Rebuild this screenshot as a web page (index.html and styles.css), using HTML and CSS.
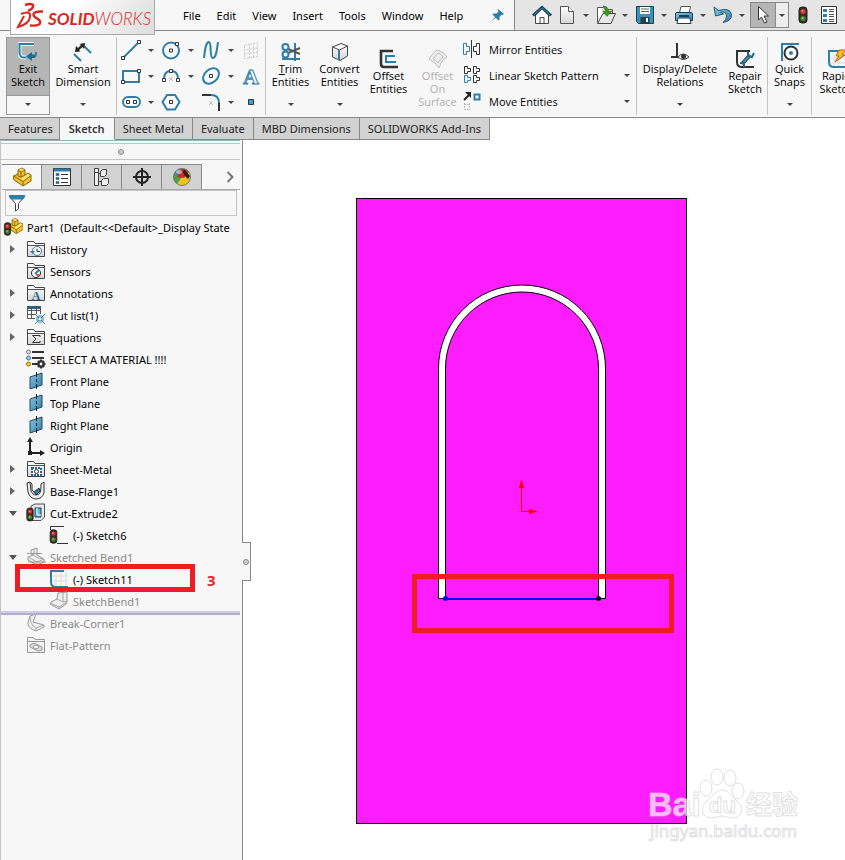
FILE: index.html
```
<!DOCTYPE html>
<html lang="en">
<head>
  <meta charset="UTF-8">
  <meta name="viewport" content="width=device-width, initial-scale=1.0">
  <title>SOLIDWORKS - Part1</title>
  <link rel="stylesheet" href="styles.css">
</head>
<body>

  <svg class="defs" aria-hidden="true">
    <defs>
      <linearGradient id="blue" x1="0" y1="0" x2="1" y2="1">
        <stop offset="0" stop-color="#8cc5e0"/><stop offset="1" stop-color="#2f7ea6"/>
      </linearGradient>
      <linearGradient id="grey" x1="0" y1="0" x2="0" y2="1">
        <stop offset="0" stop-color="#fff"/><stop offset="1" stop-color="#d5d5d5"/>
      </linearGradient>
      <symbol id="folder" viewBox="0 0 20 20">
        <path d="M1.500 17.500V2.500H7.500L9 4.500H18.500V17.500Z" fill="url(#grey)" stroke="#444"/>
        <path d="M2 6.500H18" stroke="#555"/>
      </symbol>
      <symbol id="plane" viewBox="0 0 20 20">
        <path d="M4 6L16 2V14L4 18Z" fill="url(#blue)" stroke="#1c4b66"/>
        <path d="M10.500 1V19" stroke="#222" stroke-dasharray="5 2 3 2"/>
      </symbol>
      <symbol id="light" viewBox="0 0 10 18">
        <rect x="1" y="1" width="8" height="16" rx="3" fill="#3a2a2a" stroke="#222"/>
        <circle cx="5" cy="5.500" r="2.600" fill="#d8322c"/><circle cx="5" cy="12.500" r="2.600" fill="#3d8a2d"/>
        <circle cx="4.500" cy="5" r="1" fill="#ff8a70"/><circle cx="4.500" cy="12" r="1" fill="#8ccf70"/>
      </symbol>
      <symbol id="part" viewBox="0 0 20 20">
        <path d="M6 3L10 1L13 3V8L16 6L19 8V14L11 19L1.500 12.500V9L6 7Z" fill="#f2c12e" stroke="#8a6508"/>
        <path d="M1.500 9L11 14.500V19M11 14.500L19 8.500M6 3L9 5L13 3M9 5V10L13 8M6 7V9L9 10" fill="none" stroke="#8a6508"/>
        <path d="M7 3L10 1.500L12 3L9 4.300ZM12.500 9.500L16 7L18 8.500L11 13.500L9 12Z" fill="#ffe488"/>
      </symbol>
      <symbol id="bend" viewBox="0 0 20 20">
        <path d="M5 3L11 1V8L18 12V15L11 18L2 13V10L7 8L5 7Z" fill="#eee" stroke="#999"/>
        <path d="M7 8L12 11L18 12M2 10L11 15V18M11 15L18 12M8 2V8" fill="none" stroke="#aaa"/>
      </symbol>
    </defs>
  </svg>

  <header class="topbar">
    <div class="logo">
      <svg width="30" height="30" viewBox="0 0 30 30" fill="none" stroke="#d8281e">
        <path d="M10 3Q16 1 18 3Q19 6 13 9" stroke-width="2.400"/>
        <path d="M6 12Q16 8 15 15Q14 22 3 25L9 14" stroke-width="2"/>
        <path d="M28 9.500Q18 9 18.500 13Q19 15 23 17Q27 20 24 22.500Q21 24 15 23.500" stroke-width="2.400"/>
      </svg>
      <span><b>SOLID</b>WORKS</span>
    </div>
    <nav class="menu">
      <a href="#">File</a>
      <a href="#">Edit</a>
      <a href="#">View</a>
      <a href="#">Insert</a>
      <a href="#">Tools</a>
      <a href="#">Window</a>
      <a href="#">Help</a>
      <button class="pin" aria-label="Pin menu">
        <svg width="14" height="14" viewBox="0 0 14 14"><path d="M7 1L13 6L11.500 7L10.500 6.800L8.500 9L8.600 11.500L7.500 12.500L4.700 9.800L1 13L4 9L1.500 6.500L2.500 5.400L5.500 5.600L7.500 3.500L6.500 2Z" fill="#2f7ea6"/></svg>
      </button>
    </nav>
    <div class="quick">
      <button aria-label="Home"><svg width="20" height="20" viewBox="0 0 20 20"><path d="M3.500 10V18.500H16.500V10L10 4Z" fill="#fff" stroke="#444"/><path d="M8 18.500V12.500H12V18.500" fill="none" stroke="#444"/><path d="M1 10.500L10 2.500L19 10.500" fill="none" stroke="#173f57" stroke-width="3"/><path d="M2 9.800L10 2.800L18 9.800" fill="none" stroke="#3b8fb8"/></svg></button>
      <button aria-label="New" class="new"><svg width="20" height="20" viewBox="0 0 20 20"><path d="M3.500 1.500H11.500L16.500 6.500V18.500H3.500Z" fill="url(#grey)" stroke="#555"/><path d="M11.500 1.500V6.500H16.500" fill="#fff" stroke="#555"/></svg></button><i class="caret"></i>
      <button aria-label="Open"><svg width="22" height="20" viewBox="0 0 22 20"><path d="M2.500 17.500V2.500H8.500L10 4.500H17.500V8" fill="#fff" stroke="#555"/><path d="M2.500 18.500L8 8.500H20.500L16 18.500Z" fill="#e8e8e8" stroke="#444"/><path d="M8 1Q13 1 13.500 6H17L12 11.500L7.500 6H10.500Q10.500 3 8 1Z" fill="#3c9a1c" stroke="#20600c" stroke-width=".5"/></svg></button><i class="caret"></i>
      <button aria-label="Save"><svg width="20" height="20" viewBox="0 0 20 20"><path d="M1.500 1.500H18.500V18.500H3.500L1.500 16.500Z" fill="#3b8fb8" stroke="#173f57"/><path d="M5 2H15V9H5Z" fill="#fff"/><path d="M6 4H14M6 6.500H14" stroke="#666"/><path d="M5.500 12H14.500V18H5.500Z" fill="#2a3f4c"/><path d="M11 13H13V17H11Z" fill="#fff"/></svg></button><i class="caret"></i>
      <button aria-label="Print"><svg width="20" height="20" viewBox="0 0 20 20"><path d="M5.500 8L7 1.500H16.500L15 8" fill="#fff" stroke="#555"/><path d="M1.500 9Q1.500 7.500 3 7.500H17Q18.500 7.500 18.500 9V15.500H1.500Z" fill="url(#blue)" stroke="#173f57"/><path d="M4 13L3 18.500H17L16 13Z" fill="#fff" stroke="#173f57"/><path d="M5 11H15" stroke="#173f57" stroke-width="2"/></svg></button><i class="caret"></i>
      <button aria-label="Undo"><svg width="20" height="20" viewBox="0 0 20 20"><path d="M1 2L2.500 11L10.500 9L7.500 7.200Q13 6 13.500 11Q13.500 15 10 17.500Q19 16 18.500 9.500Q17 2 5.500 5.500Z" fill="url(#blue)" stroke="#235c7b"/></svg></button><i class="caret last"></i>
      <div class="picker">
        <button aria-label="Select"><svg width="14" height="20" viewBox="0 0 14 20"><path d="M2.500 1.500V15L5.500 12L8.500 18L11 17L8 11H12.500Z" fill="#fff" stroke="#333"/></svg></button>
        <button aria-label="Select options" class="drop"><i class="caret"></i></button>
      </div>
      <button class="rebuild" aria-label="Rebuild"><svg width="10" height="18"><use href="#light"/></svg></button>
      <button aria-label="Options"><svg width="18" height="20" viewBox="0 0 18 20"><path d="M1.500 1.500H16.500V18.500H1.500Z" fill="#fff" stroke="#333"/><path d="M3 4H7V7H3ZM3 9H7V12H3ZM3 14H7V17H3Z" fill="#2f7ea6"/><path d="M9 4.500H14M9 6.500H14M9 9.500H14M9 11.500H14M9 14.500H14M9 16.500H14" stroke="#555"/></svg></button>
    </div>
  </header>

  <section class="ribbon">
    <button class="tool exit">
      <svg width="20" height="20" viewBox="0 0 20 20"><path d="M16 2H1.500V11Q2 15.500 6 15.500H8" fill="none" stroke="#e9f5fb" stroke-width="4"/><path d="M16 2H1.500V11Q2 15.500 6 15.500H8M18 10V12Q18 14.500 15 14.500" fill="none" stroke="#2f7ea6" stroke-width="2"/><path d="M8 14.500L14 10V12.500H17V16H14V19Z" fill="#1f6b91"/></svg>
      <span>Exit<br>Sketch</span>
      <i class="caret"></i>
    </button>
    <button class="tool smart">
      <svg width="20" height="20" viewBox="0 0 20 20"><path d="M1 12L8 19M11 4L18 11" stroke="#2f7ea6" stroke-width="2"/><path d="M2 10L3 4L5 6L8 3L6.500 2L12 1L11 7L9.500 5L6 8L7.500 9.500Z" fill="#222"/></svg>
      <span>Smart<br>Dimension</span>
      <i class="caret"></i>
    </button>
    <div class="entities">
      <button aria-label="Line"><svg width="20" height="20" viewBox="0 0 20 20"><path d="M3 17L17 3" stroke="#2f7ea6" stroke-width="2"/><path d="M.5 16.500H3.500V19.500H.5ZM16.500.5H19.500V3.500H16.500Z" fill="#fff" stroke="#333"/></svg></button><i class="caret"></i>
      <button aria-label="Circle"><svg width="20" height="20" viewBox="0 0 20 20"><circle cx="10" cy="10.500" r="8" fill="none" stroke="#2f7ea6" stroke-width="2"/><path d="M8.500 9H11.500V12H8.500ZM14.500 2.500H17.500V5.500H14.500Z" fill="#fff" stroke="#333"/></svg></button><i class="caret"></i>
      <button aria-label="Spline"><svg width="20" height="20" viewBox="0 0 20 20"><path d="M3 18C4 9 5 2 8 2C11 2 8 18 12 18C15 18 16 10 17 2" fill="none" stroke="#2f7ea6" stroke-width="2"/></svg></button><i class="caret"></i>
      <button aria-label="Sketch plane"><svg width="20" height="20" viewBox="0 0 20 20"><path d="M3.500 5.500L16.500 2.500V16.500L3.500 18.500ZM8.500 4V18M12.500 3V17M3 10L17 8M3 14L17 12" fill="none" stroke="#ccc" stroke-dasharray="2 1"/></svg></button>
      <button aria-label="Rectangle"><svg width="20" height="20" viewBox="0 0 20 20"><path d="M2 5H18V16H2Z" fill="none" stroke="#2f7ea6" stroke-width="2"/><path d="M.5 14.500H3.500V17.500H.5ZM16.500 3.500H19.500V6.500H16.500Z" fill="#fff" stroke="#333"/></svg></button><i class="caret"></i>
      <button aria-label="Arc"><svg width="20" height="20" viewBox="0 0 20 20"><path d="M3 13Q3 5 10 5Q17 5 17 13" fill="none" stroke="#2f7ea6" stroke-width="2"/><path d="M8 11L12 15M12 11L8 15" stroke="#bbb"/><path d="M1.500 12.500H4.500V15.500H1.500ZM8.500 3.500H11.500V6.500H8.500ZM15.500 12.500H18.500V15.500H15.500Z" fill="#fff" stroke="#333"/></svg></button><i class="caret"></i>
      <button aria-label="Ellipse"><svg width="20" height="20" viewBox="0 0 20 20"><ellipse cx="10" cy="10" rx="9" ry="6.500" transform="rotate(-42 10 10)" fill="none" stroke="#2f7ea6" stroke-width="2"/><path d="M8.500 8.500H11.500V11.500H8.500Z" fill="#fff" stroke="#333"/></svg></button><i class="caret"></i>
      <button aria-label="Text"><svg width="20" height="20" viewBox="0 0 20 20"><text x="10" y="18" text-anchor="middle" class="glyph outline">A</text></svg></button>
      <button aria-label="Slot"><svg width="20" height="20" viewBox="0 0 20 20"><rect x="2" y="5" width="17" height="10" rx="5" fill="none" stroke="#2f7ea6" stroke-width="2"/><path d="M5.500 8.500H8.500V11.500H5.500ZM12.500 8.500H15.500V11.500H12.500Z" fill="#fff" stroke="#333"/></svg></button><i class="caret"></i>
      <button aria-label="Polygon"><svg width="20" height="20" viewBox="0 0 20 20"><path d="M6 3H14L18.500 10L14 17.500H6L1.500 10Z" fill="none" stroke="#2f7ea6" stroke-width="2"/><path d="M8.500 8.500H11.500V11.500H8.500Z" fill="#fff" stroke="#333"/></svg></button><i></i>
      <button aria-label="Fillet"><svg width="20" height="20" viewBox="0 0 20 20"><path d="M1 3H10M18 11V19" stroke="#333" stroke-width="2"/><path d="M10 3Q18 3 18 11" fill="none" stroke="#2f7ea6" stroke-width="2"/><path d="M8 9L12 13M12 9L8 13" stroke="#bbb"/></svg></button><i class="caret"></i>
      <button aria-label="Point"><svg width="20" height="20" viewBox="0 0 20 20"><path d="M7.500 7.500H12.500V12.500H7.500Z" fill="#4a9cc0" stroke="#173f57"/></svg></button>
    </div>
    <button class="tool">
      <svg width="20" height="20" viewBox="0 0 20 20"><path d="M14 1V19M1 17H19" stroke="#2f7ea6" stroke-width="2"/><path d="M7 7L19 12M7 11L19 6" stroke="#555" stroke-width="2"/><circle cx="4.500" cy="5" r="3" fill="none" stroke="#2f7ea6" stroke-width="2"/><circle cx="4.500" cy="12.500" r="3" fill="none" stroke="#2f7ea6" stroke-width="2"/></svg>
      <span><u>T</u>rim<br>Entities</span>
      <i class="caret"></i>
    </button>
    <button class="tool">
      <svg width="20" height="20" viewBox="0 0 20 20"><path d="M2.500 5L11 1.500L17.500 4V14L10 18.500L2.500 15Z" fill="url(#grey)" stroke="#444"/><path d="M2.500 5L9.500 8L17.500 4" fill="none" stroke="#555"/><path d="M9 8V18" stroke="#2f7ea6" stroke-width="2"/></svg>
      <span>Convert<br>Entities</span>
      <i class="caret"></i>
    </button>
    <button class="tool low">
      <svg width="20" height="20" viewBox="0 0 20 20"><path d="M14 2H2V15Q2 18 5 18H19" fill="none" stroke="#333" stroke-width="2.600"/><path d="M16 7H7V13H17" fill="none" stroke="#2f7ea6" stroke-width="2"/></svg>
      <span>Offset<br>Entities</span>
    </button>
    <button class="tool low" disabled>
      <svg width="20" height="20" viewBox="0 0 20 20" fill="#eee" stroke="#bbb"><path d="M1 10Q6 2 10 1Q17 4 19 8L15 11Q13 13 11 19Q7 13 1 10Z"/><path d="M5 10Q8 5 11 4Q14 6 15 8Q12 10 10 14Q8 11 5 10Z"/></svg>
      <span>Offset<br>On<br>Surface</span>
    </button>
    <div class="list">
      <button><svg width="20" height="20" viewBox="0 0 20 20" fill="none"><path d="M9.500 1V19" stroke="#333"/><path d="M1.500 4.500H4.500V7.500H7.500V12.500H4.500V15.500H1.500Z" stroke="#2f7ea6"/><path d="M17.500 4.500H14.500V7.500H11.500V12.500H14.500V15.500H17.500Z" stroke="#333"/></svg><span>Mirror Entities</span></button>
      <button><svg width="20" height="20" viewBox="0 0 20 20" fill="none" stroke="#333"><path d="M2.500 1.500H5.500V3.500H8.500V6.500H5.500V8.500H2.500ZM11.500 1.500H14.500V3.500H17.500V6.500H14.500V8.500H11.500ZM11.500 10.500H14.500V12.500H17.500V15.500H14.500V17.500H11.500Z"/><path d="M2.500 10.500H5.500V12.500H8.500V15.500H5.500V17.500H2.500Z" stroke="#2f7ea6"/></svg><span>Linear Sketch Pattern</span><i class="caret"></i></button>
      <button><svg width="20" height="20" viewBox="0 0 20 20" fill="none"><path d="M12.500 3.500H17.500V8.500H12.500Z" stroke="#2f7ea6" stroke-width="2"/><path d="M2 9L7 4" stroke="#222" stroke-width="2"/><path d="M3 1H9V7Z" fill="#222"/><path d="M2 13.500H8M2 18.500H8M2.500 12V19M7.500 12V19" stroke="#bbb" stroke-dasharray="2 1"/></svg><span>Move Entities</span><i class="caret"></i></button>
    </div>
    <button class="tool display">
      <svg width="20" height="20" viewBox="0 0 20 20"><path d="M7 1V15M1 15H10" stroke="#333" stroke-width="2"/><path d="M8 15Q13 9 19 15Q13 20 8 15Z" fill="#fff" stroke="#333"/><circle cx="13.500" cy="14.500" r="2.500" fill="#333"/></svg>
      <span>Display/Delete<br>Relations</span>
      <i class="caret"></i>
    </button>
    <button class="tool low repair">
      <svg width="20" height="20" viewBox="0 0 20 20"><path d="M15 2H2V13Q2 18 7 18H19" fill="none" stroke="#333" stroke-width="2"/><path d="M7 15L15 6" stroke="#173f57" stroke-width="4"/><path d="M7 15L15 6" stroke="#3b8fb8" stroke-width="2"/><path d="M13 3V7L17 8L19 4M5 14L9 14L9 18" fill="none" stroke="#2a6685" stroke-width="2"/></svg>
      <span>Repair<br>Sketch</span>
    </button>
    <button class="tool snaps">
      <svg width="20" height="20" viewBox="0 0 20 20"><path d="M19 2H2V19" fill="none" stroke="#2f7ea6" stroke-width="2"/><circle cx="11" cy="11" r="6.500" fill="#fff" stroke="#333" stroke-width="2"/><circle cx="11" cy="11" r="2" fill="#2f7ea6"/></svg>
      <span>Quick<br>Snaps</span>
      <i class="caret"></i>
    </button>
    <button class="tool low rapid">
      <svg width="20" height="20" viewBox="0 0 20 20"><path d="M7 5V18M12 5V18M3 9H19M3 14H19" stroke="#ddd"/><path d="M15 2H2V13Q2 18 7 18H19" fill="none" stroke="#2f7ea6" stroke-width="2"/><path d="M12 1H19L15 6H18L8 13L12 7H9Z" fill="#fbc21c" stroke="#c4561a"/></svg>
      <span>Rapid<br>Sketch</span>
    </button>
  </section>

  <nav class="tabs">
    <a href="#">Features</a>
    <a href="#" class="active">Sketch</a>
    <a href="#">Sheet Metal</a>
    <a href="#">Evaluate</a>
    <a href="#">MBD Dimensions</a>
    <a href="#">SOLIDWORKS Add-Ins</a>
  </nav>

  <main class="workspace">
    <aside class="sidebar">
      <div class="grip"></div>
      <div class="views">
        <button class="active" aria-label="Feature tree"><svg width="20" height="20"><use href="#part"/></svg></button>
        <button aria-label="Properties"><svg width="20" height="20" viewBox="0 0 20 20"><path d="M1.500 1.500H18.500V18.500H1.500Z" fill="#fff" stroke="#333"/><path d="M2 3H18" stroke="#2f7ea6" stroke-width="3"/><path d="M4 6.500H7V8.500H4ZM4 10.500H7V12.500H4ZM4 14.500H7V16.500H4Z" fill="#2f7ea6" stroke="#173f57" stroke-width=".5"/><path d="M9 7.500H16M9 11.500H16M9 15.500H16" stroke="#333"/></svg></button>
        <button aria-label="Configurations"><svg width="20" height="20" viewBox="0 0 20 20" fill="#eee" stroke="#444"><path d="M2.500 1.500H6.500V18.500H2.500ZM2.500 5.500H6.500M6.500 6.500H9M6.500 14.500H10"/><path d="M8.500 4.500L10.500 2.500H14.500V7.500L12.500 9.500H8.500ZM9.500 13.500L11.500 11.500H16.500V16.500L14.500 18.500H9.500Z"/></svg></button>
        <button aria-label="Dimensions"><svg width="20" height="20" viewBox="0 0 20 20" fill="none" stroke="#222" stroke-width="2"><circle cx="10" cy="10" r="6"/><path d="M10 1V19M1 10H19"/></svg></button>
        <button aria-label="Appearances"><svg width="20" height="20" viewBox="0 0 20 20"><circle cx="10" cy="10" r="8.500" fill="#f4c21d"/><path d="M10 10L2 7Q4 1 11 1.500Z" fill="#3a78b8"/><path d="M10 10L2 7Q0 13 5 17Z" fill="#49a142"/><path d="M5 10L9 2Q15 1 17 5L12 11Z" fill="#cf2c25"/><path d="M12 2L18 9L16 12Q12 9 11 5Z" fill="#222"/><circle cx="10" cy="10" r="8.500" fill="none" stroke="#777"/><ellipse cx="7" cy="5" rx="3" ry="2" fill="#fff" opacity=".5"/></svg></button>
        <button class="more" aria-label="More"><svg width="8" height="12" viewBox="0 0 8 12"><path d="M1.500 1L6.500 6L1.500 11" fill="none" stroke="#777" stroke-width="2"/></svg></button>
      </div>
      <label class="filter">
        <svg width="18" height="18" viewBox="0 0 18 18"><path d="M1.500 2.500H16.500L10.500 9.500V15L7.500 17V9.500Z" fill="#fff" stroke="#444"/><path d="M1 1H17V3L15 5.500H3L1 3Z" fill="#2f7ea6"/></svg>
        <input type="text" aria-label="Filter">
      </label>

      <ul class="tree">
        <li class="root"><svg width="20" height="20" viewBox="0 0 20 20"><use href="#part" x="4" y="0" width="17" height="18"/><use href="#light" x="0" y="5" width="9" height="14"/></svg>Part1&nbsp; (Default&lt;&lt;Default&gt;_Display State</li>
        <li><i class="fold"></i><svg width="20" height="20"><use href="#folder"/><circle cx="11" cy="12" r="4.500" fill="#fff" stroke="#2f7ea6"/><path d="M11 9.500V12.500H14" fill="none" stroke="#333"/><path d="M4 12H9L6.500 15Z" fill="#2f7ea6"/></svg>History</li>
        <li><i></i><svg width="20" height="20"><use href="#folder"/><circle cx="10" cy="12" r="4.500" fill="#fff" stroke="#222"/><path d="M9 13L13 9" stroke="#2f7ea6" stroke-width="2"/><path d="M10 13H14L11 16Z" fill="#e0401f"/></svg>Sensors</li>
        <li><i class="fold"></i><svg width="20" height="20"><use href="#folder"/><text x="10" y="17" text-anchor="middle" class="glyph">A</text></svg>Annotations</li>
        <li><i class="fold"></i><svg width="20" height="20" viewBox="0 0 20 20"><path d="M1.500 1.500H14.500V13.500H1.500ZM1 5.500H15M1 9.500H15M5.500 2V13M10.500 2V13" fill="#fff" stroke="#555"/><path d="M1 2.500H15" stroke="#2f5f7a" stroke-width="3"/><path d="M9 9H19V19H9Z" fill="#f7f7f7"/><path d="M10 13H13V10M18 13H15V10M10 15H13V18M18 15H15V18" fill="none" stroke="#2f7ea6"/><path d="M9 9L13 13M19 9L15 13M9 19L13 15M19 19L15 15" stroke="#2f7ea6"/></svg>Cut list(1)</li>
        <li><i class="fold"></i><svg width="20" height="20"><use href="#folder"/><path d="M14 10V8.500H6.500L10 12L6.500 15.500H14V14" fill="none" stroke="#333"/></svg>Equations</li>
        <li><i></i><svg width="20" height="20" viewBox="0 0 20 20"><path d="M6 3H18M6 9H18M6 15H12" stroke="#333" stroke-width="2"/><circle cx="2.500" cy="3" r="2" fill="#ddd" stroke="#777"/><circle cx="2.500" cy="9" r="2" fill="#8ad0f0" stroke="#2f7ea6"/><circle cx="2.500" cy="15" r="2" fill="#ffc928" stroke="#997000"/><circle cx="15" cy="15" r="2.600" fill="none" stroke="#333" stroke-width="2.400"/><path d="M15 10.500V12M15 18V19.500M10.500 15H12M18 15H19.500M12 12L13 13M17 17L18 18M18 12L17 13M12 18L13 17" stroke="#333" stroke-width="2"/></svg>SELECT A MATERIAL !!!!</li>
        <li><i></i><svg width="20" height="20"><use href="#plane"/></svg>Front Plane</li>
        <li><i></i><svg width="20" height="20"><use href="#plane"/></svg>Top Plane</li>
        <li><i></i><svg width="20" height="20"><use href="#plane"/></svg>Right Plane</li>
        <li><i></i><svg width="20" height="20" viewBox="0 0 20 20"><path d="M4 3V16H16" fill="none" stroke="#222" stroke-width="2"/><path d="M4 0L7 5H1ZM19 16L14 13V19ZM2 14H6V18H2Z" fill="#222"/></svg>Origin</li>
        <li><i class="fold"></i><svg width="20" height="20"><use href="#folder"/><path d="M6 9H15V16H6Z" fill="#fff" stroke="#1f6b91" stroke-width="2" stroke-dasharray="2 1"/><circle cx="10.500" cy="12.500" r="2" fill="none" stroke="#333"/></svg>Sheet-Metal</li>
        <li><i class="fold"></i><svg width="20" height="20" viewBox="0 0 20 20"><path d="M1 2L4 1L5 10Q8 16 13 13Q15 12 15 3L18 1V12Q16 18 10 18Q4 18 2 11Z" fill="#eee" stroke="#333"/><path d="M4 1L6 3V9L9 12" fill="none" stroke="#333"/><path d="M8 11L13 7L14 10L10 14Z" fill="#2f7ea6" stroke="#173f57"/></svg>Base-Flange1</li>
        <li><i class="fold open"></i><svg width="20" height="20" viewBox="0 0 20 20"><path d="M5 3L9 1H18.500V14L15 17.500H5Z" fill="#e8e8e8" stroke="#555"/><path d="M9 5H15V14H9Z" fill="#6bb4d6" stroke="#173f57"/><path d="M11 5V12H15" fill="none" stroke="#fff"/><use href="#light" x="0" y="4" width="8" height="15"/></svg>Cut-Extrude2</li>
        <li class="child"><svg width="20" height="20" viewBox="0 0 20 20"><path d="M1.500 5V1.500H15M8 18.500H19" fill="none" stroke="#333"/><use href="#light" x="0" y="4" width="9" height="15"/></svg>(-) Sketch6</li>
        <li class="off"><i class="fold open"></i><svg width="20" height="20" viewBox="0 0 20 20"><use href="#bend"/><path d="M1 6.500H16M2 15H20" stroke="#999"/></svg>Sketched Bend1</li>
        <li class="child marked"><svg width="20" height="20" viewBox="0 0 20 20"><path d="M7 3V18M12 1V18M17 1V18M3 7H19M3 12H19" stroke="#ddd"/><path d="M15 2H2V13Q2 18 7 18H19" fill="none" stroke="#2f7ea6" stroke-width="2"/></svg>(-) Sketch11<b class="step">3</b></li>
        <li class="child off"><svg width="20" height="20" viewBox="0 0 20 20"><path d="M8 8L9 2L18 1V11L17 13L10 18L1 13L2 11Z" fill="#eee" stroke="#999"/><path d="M1 12L10 16L18 11M8 8L14 11L18 10M14 2V11M10 16V18" fill="none" stroke="#aaa"/></svg>SketchBend1</li>
        <li class="off rollback"><i></i><svg width="20" height="20" viewBox="0 0 20 20"><path d="M4 3L10 1L7 9L18 12V14L10 18Q1 15 2 9Z" fill="#eee" stroke="#999"/><path d="M4 3Q4 12 10 15V18M10 15L18 12" fill="none" stroke="#aaa"/></svg>Break-Corner1</li>
        <li class="off"><i></i><svg width="20" height="20" viewBox="0 0 20 20"><path d="M1.500 17.500V2.500H7.500L9 4.500H18.500V17.500ZM2 6.500H18" fill="#f1f1f1" stroke="#999"/><path d="M4 10L8 8L16 12V15L12 16L4 12Z" fill="#ddd" stroke="#999"/><ellipse cx="10" cy="12" rx="3" ry="1.500" fill="#fff" stroke="#999"/></svg>Flat-Pattern</li>
      </ul>
      <button class="splitter" aria-label="Collapse panel"></button>
    </aside>

    <section class="canvas">
      <svg width="602" height="720" viewBox="243 140 602 720">
        <rect x="356.500" y="198.500" width="330" height="625" fill="#ff1cff" stroke="#000"/>
        <path d="M438.500 598.500V368.500A83.500 83.500 0 0 1 605.500 368.500V598.500H598.500V368.500A76.500 76.500 0 0 0 445.500 368.500V598.500Z" fill="#fff" stroke="#000"/>
        <path d="M521.500 484V511.500H532" fill="none" stroke="#f00"/>
        <path d="M521.500 479L524 488H519ZM538 511.500L529 509V514Z" fill="#f00"/>
        <rect x="414.500" y="576.500" width="257" height="54" fill="none" stroke="#ee1c24" stroke-width="5"/>
        <path d="M445 599H599" stroke="#00f" stroke-width="2"/>
        <circle cx="445.500" cy="598.500" r="2.500" fill="#00f"/>
        <circle cx="598.500" cy="598.500" r="2.500"/>

        <g class="watermark">
          <text x="648" y="816" class="brand">Bai</text>
          <path d="M722 790C729 790 733 798 738 802C745 808 741 818 733 818C728 818 726 816 722 816C718 816 715 818 711 818C702 818 700 808 706 802C711 798 715 790 722 790Z"/>
          <ellipse cx="706" cy="788" rx="6" ry="8"/>
          <ellipse cx="717" cy="777" rx="6" ry="8"/>
          <ellipse cx="730" cy="778" rx="6" ry="8"/>
          <ellipse cx="738" cy="791" rx="6" ry="8"/>
          <text x="709" y="813" class="du">du</text>
          <text x="746" y="814" class="cjk">经验</text>
          <text x="650" y="837" class="url">jingyan.baidu.com</text>
        </g>
      </svg>
    </section>
  </main>

</body>
</html>
```

FILE: styles.css
```
*,
*::before {
  margin: 0;
  padding: 0;
  box-sizing: border-box;
}

body {
  font-family: "Noto Sans", "Open Sans", "Noto Sans CJK SC", sans-serif;
  font-size: 11px;
  color: #000;
  background: #fff;
  min-height: 100vh;
  display: flex;
  flex-direction: column;
  overflow-x: hidden;
}

button {
  background: none;
  border: 0;
  font: inherit;
  color: inherit;
  display: flex;
  align-items: center;
  justify-content: center;
}

a {
  color: inherit;
  text-decoration: none;
}

svg {
  flex: none;
  display: block;
}

.defs {
  position: absolute;
  width: 0;
  height: 0;
}

.caret {
  flex: none;
  width: 6px;
  border: 3px solid transparent;
  border-top-color: #444;
  border-bottom: 0;
}

/* title bar */
.topbar {
  position: relative;
  height: 31px;
  display: flex;
  background: #f7f7f7;
  border-bottom: 1px solid #888;
}

.logo {
  position: absolute;
  left: 10px;
  top: 0;
  width: 145px;
  height: 35px;
  padding-left: 4px;
  display: flex;
  align-items: center;
  gap: 3px;
  background: linear-gradient(120deg, #fff 40%, #ddd);
  border: 1px solid #aaa;
  border-top: 0;
  color: #d8281e;
  font-family: Lato, sans-serif;
  font-size: 17px;
  font-style: italic;
  font-weight: 300;
}

.logo span {
  padding-top: 3px;
}

.logo b {
  font-weight: 700;
}

.menu {
  width: 515px;
  flex: none;
  padding-left: 183px;
  display: flex;
  align-items: center;
  gap: 16px;
  border-right: 1px solid #888;
}

.pin {
  margin-left: 12px;
}

.quick {
  flex: 1;
  min-width: 0;
  padding-left: 17px;
  display: flex;
  align-items: center;
  background: #e5e5e5;
}

.quick button {
  width: 20px;
  flex: none;
}

.quick > .caret {
  margin: 0 7px 0 6px;
}

.quick .new {
  margin-left: 5px;
}

.quick > .last {
  margin-right: 5px;
}

.picker {
  display: flex;
  height: 26px;
  border: 1px solid #888;
}

.picker button {
  width: 24px;
  background: #b5b5b5;
}

.picker .drop {
  width: 13px;
  background: #eee;
  border-left: 1px solid #888;
}

.quick .rebuild {
  margin: 0 6px 0 4px;
}

/* command ribbon */
.ribbon {
  height: 87px;
  padding: 6px 0 2px 6px;
  display: flex;
  overflow: hidden;
  background: #f7f7f7;
  border-bottom: 1px solid #888;
  font-family: "Open Sans", sans-serif;
}

.tool {
  position: relative;
  flex: none;
  width: 49px;
  padding-top: 5px;
  flex-direction: column;
  justify-content: flex-start;
  line-height: 13px;
  white-space: nowrap;
}

.tool .caret {
  margin-top: 15px;
}

.tool.low {
  padding-top: 12px;
}

.tool:disabled {
  color: #b0b0b0;
}

.tool.exit {
  width: 44px;
  padding-top: 4px;
  background: linear-gradient(#b5b5b5 57px, #999 57px, #999 58px, #f7f7f7 58px);
  border: 1px solid #999;
}

.tool.smart {
  width: 66px;
}

.entities {
  flex: none;
  width: 150px;
  padding-left: 4px;
  border: 1px solid #c4c4c4;
  border-width: 0 1px;
  display: grid;
  grid-template-columns: 20px 20px 20px 20px 20px 20px 20px;
  grid-auto-rows: 26px;
  align-items: center;
  justify-items: center;
}

.list {
  flex: none;
  width: 174px;
  margin-top: -1px;
  display: grid;
  grid-auto-rows: 26px;
}

.list button {
  justify-content: flex-start;
  gap: 7px;
}

.list .caret {
  margin: 0 6px 0 auto;
}

.tool.display {
  width: 87px;
  border-left: 1px solid #c4c4c4;
}

.tool.repair {
  width: 44px;
}

.tool.snaps {
  width: 45px;
  border: 1px solid #c4c4c4;
  border-width: 0 1px;
}

/* command tabs */
.tabs {
  display: flex;
  height: 22px;
}

.tabs a {
  padding: 0 8px;
  line-height: 21px;
  background: #d2d2d2;
  border: 1px solid #888;
  border-width: 0 1px 1px 0;
  color: #222;
}

.tabs a:first-child {
  padding-right: 6px;
}

.tabs a.active {
  padding: 0 9px;
  background: #f7f7f7;
  border-bottom-color: #f7f7f7;
  font-weight: 600;
  color: #333;
}

.workspace {
  flex: 1;
  display: flex;
}

/* feature manager */
.sidebar {
  position: relative;
  flex: none;
  width: 243px;
  background: #f7f7f7;
  border-right: 1px solid #888;
  border-left: 1px solid #c4c4c4;
}

.grip {
  height: 20px;
  margin-right: 2px;
  border-top: 1px solid #9ab4c0;
  border-bottom: 1px solid #c4c4c4;
  display: flex;
  align-items: center;
  justify-content: center;
  padding-top: 4px;
  background: linear-gradient(#f7f7f7 2px, #c4c4c4 2px, #c4c4c4 3px, #f7f7f7 3px);
}

.grip::before,
.splitter::before {
  content: "";
  width: 6px;
  height: 6px;
  border: 1px solid #888;
  border-radius: 50%;
  background: #ccc;
}

.views {
  margin: 4px 2px 0 1px;
  height: 26px;
  display: flex;
  border-bottom: 1px solid #aaa;
}

.views button {
  width: 40px;
  background: #d2d2d2;
  border: 1px solid #888;
  border-width: 1px 1px 0 0;
}

.views .active {
  background: #f7f7f7;
}

.views .more {
  margin-left: auto;
  width: 20px;
  background: none;
  border: 0;
}

.filter {
  margin: 0 5px 0 4px;
  height: 26px;
  padding-left: 2px;
  display: flex;
  align-items: center;
  border: 1px solid #c4c4c4;
}

.filter input {
  flex: 1;
  min-width: 0;
  border: 0;
  outline: 0;
  background: none;
  font: inherit;
}

.tree {
  list-style: none;
}

.tree li {
  position: relative;
  height: 22px;
  padding-left: 8px;
  display: flex;
  align-items: center;
  white-space: nowrap;
}

.tree li > svg {
  margin-right: 4px;
}

.tree i {
  width: 17px;
  flex: none;
}

.tree .root {
  padding-left: 2px;
}

.tree .child {
  padding-left: 48px;
}

.tree .off {
  color: #8a8a8a;
}

.fold::before {
  content: "";
  display: block;
  width: 5px;
  margin-left: 1px;
  border: 4px solid transparent;
  border-left: 5px solid #666;
  border-right: 0;
}

.fold.open::before {
  width: 8px;
  margin-left: 0;
  border: 4px solid transparent;
  border-top: 5px solid #555;
  border-bottom: 0;
}

.tree .rollback::before {
  content: "";
  position: absolute;
  left: 0;
  right: 2px;
  top: -1px;
  height: 4px;
  background: linear-gradient(#cdcde6 2px, #b0b0cc 2px);
}

.marked::before {
  content: "";
  position: absolute;
  left: 14px;
  top: -4px;
  width: 180px;
  height: 28px;
  border: 5px solid #ee1c24;
}

.step {
  position: absolute;
  left: 206px;
  top: 2px;
  font-size: 15px;
  color: #ee1c24;
}

.splitter {
  position: absolute;
  left: 241px;
  top: 402px;
  width: 9px;
  height: 39px;
  background: #f7f7f7;
  border: 1px solid #888;
  border-left: 0;
}

/* model view */
.canvas {
  flex: 1;
  min-width: 0;
  overflow: hidden;
}

.glyph {
  font-family: "Liberation Serif", serif;
  font-size: 12px;
  font-weight: bold;
  fill: #1f6b91;
}

.glyph.outline {
  font-size: 22px;
  fill: #fff;
  stroke: #2f7ea6;
}

.watermark {
  fill: #fff;
  fill-opacity: .7;
  stroke: #ccc;
  stroke-opacity: .6;
}

.watermark .brand {
  font-family: "Liberation Sans", sans-serif;
  font-size: 34px;
  font-weight: bold;
}

.watermark .du {
  font-family: "Liberation Sans", sans-serif;
  font-size: 22px;
  font-weight: bold;
}

.watermark .cjk {
  font-family: "Noto Sans CJK SC", sans-serif;
  font-size: 26px;
  font-weight: bold;
}

.watermark .url {
  font-size: 17px;
}
```
